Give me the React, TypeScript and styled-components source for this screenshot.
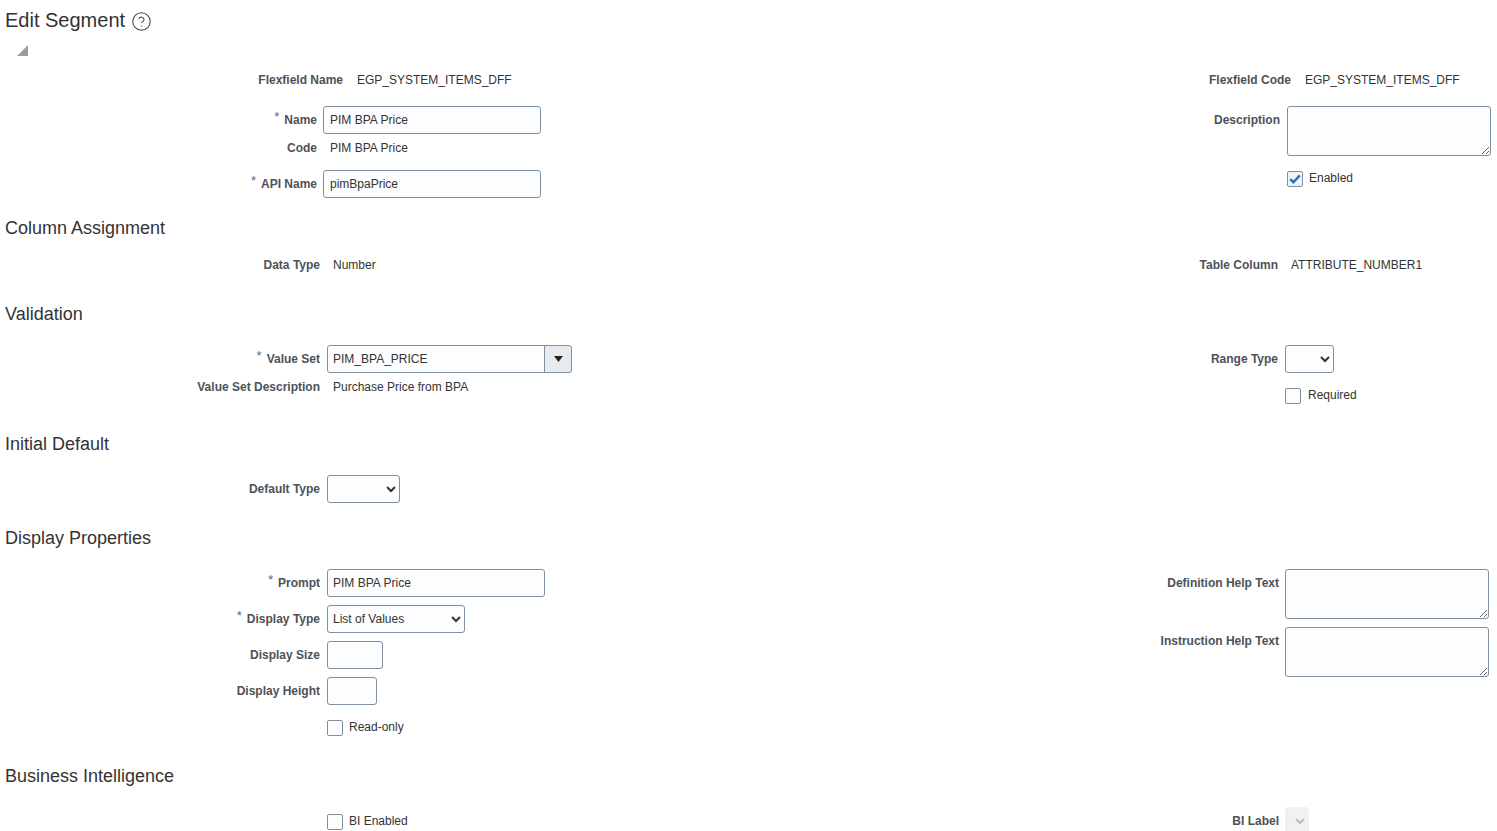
import React from "react";
import styled, { createGlobalStyle } from "styled-components";
import { CircleHelp } from "lucide-react";

const Global = createGlobalStyle`
  html, body { margin: 0; padding: 0; height: 831px; overflow: hidden; background: #fff; }
  body { font-family: "Liberation Sans", Arial, sans-serif; font-size: 12px; color: #333; }
`;

const Page = styled.main`
  width: 1497px;
  height: 831px;
  overflow: hidden;
`;

const TitleBar = styled.header`
  height: 40px;
  padding-left: 5px;
  display: flex;
  align-items: center;
  gap: 6px;
  color: #333;
`;

const Title = styled.h1`
  margin: 0;
  font-size: 20px;
  font-weight: 400;
  line-height: 40px;
`;

const HelpIcon = styled(CircleHelp)`
  width: 21px;
  height: 21px;
  color: #444;
  margin-top: 2px;
`;

const DisclosureRow = styled.div`
  height: 34px;
  padding: 5px 0 0 17px;
  box-sizing: border-box;
`;

const Section = styled.section<{ $mt?: number }>`
  margin-top: ${(p) => p.$mt ?? 21}px;
`;

const SectionTitle = styled.h2`
  margin: 0 0 17px;
  padding-left: 5px;
  font-size: 18px;
  font-weight: 400;
  line-height: 28px;
  color: #333;
`;

const Columns = styled.div<{ $mb?: number }>`
  display: grid;
  grid-template-columns: 1100px 397px;
  align-items: start;
  margin-bottom: ${(p) => p.$mb ?? 0}px;
`;

const Column = styled.div<{ $label: number; $pad?: number; $gap?: number }>`
  --label-w: ${(p) => p.$label}px;
  --label-gap: ${(p) => p.$gap ?? 7}px;
  --field-pad: ${(p) => p.$pad ?? 5}px;
  display: flex;
  flex-direction: column;
  gap: 8px;
  min-width: 0;
`;

const Row = styled.div<{ $flush?: boolean; $text?: boolean }>`
  display: flex;
  align-items: flex-start;
  gap: var(--label-gap);
  min-height: ${(p) => (p.$text ? 12 : 28)}px;
  margin-bottom: ${(p) => (p.$flush ? -8 : 0)}px;
`;

const Label = styled.label<{ $short?: boolean }>`
  width: var(--label-w);
  flex: none;
  text-align: right;
  font-weight: 700;
  color: #4d5257;
  line-height: ${(p) => (p.$short ? 12 : 28)}px;
  white-space: nowrap;
`;

const Star = styled.span`
  color: #3f6fa8;
  font-weight: 400;
  font-size: 13px;
  margin-right: 5px;
  position: relative;
  top: -3px;
`;

const Value = styled.span<{ $short?: boolean; $inset?: number }>`
  padding-left: ${(p) => p.$inset ?? 6}px;
  line-height: ${(p) => (p.$short ? 12 : 28)}px;
  color: #333;
  white-space: nowrap;
`;

const fieldChrome = `
  box-sizing: border-box;
  border: 1px solid #7e8f9f;
  border-radius: 3px;
  background: #fbfdfe;
  font-family: "Liberation Sans", Arial, sans-serif;
  font-size: 12px;
  color: #333;
  outline: none;
`;

const TextInput = styled.input<{ $w: number }>`
  ${fieldChrome}
  width: ${(p) => p.$w}px;
  height: 28px;
  padding: 0 var(--field-pad);
`;

const TextArea = styled.textarea`
  ${fieldChrome}
  display: block;
  width: 204px;
  height: 50px;
  padding: 4px 5px;
`;

const Select = styled.select<{ $w: number }>`
  ${fieldChrome}
  width: ${(p) => p.$w}px;
  height: 28px;
  padding: 0 0 0 1px;
  &:disabled {
    background: #f1f1f1;
    border-color: #f1f1f1;
    opacity: 1;
    color: #bbb;
  }
`;

const Combo = styled.div`
  display: flex;
  width: 245px;
  height: 28px;
`;

const ComboInput = styled.input`
  ${fieldChrome}
  flex: 1;
  min-width: 0;
  height: 28px;
  padding: 0 5px;
  border-radius: 3px 0 0 3px;
`;

const ComboButton = styled.button`
  box-sizing: border-box;
  width: 28px;
  height: 28px;
  padding: 0;
  margin-left: -1px;
  border: 1px solid #7e8f9f;
  border-radius: 0 3px 3px 0;
  background: #e8ebed;
  display: flex;
  align-items: center;
  justify-content: center;
`;

const CheckRow = styled.label<{ $gap?: number }>`
  display: flex;
  align-items: center;
  gap: ${(p) => p.$gap ?? 6}px;
  height: 28px;
  color: #333;
`;

const CheckSpacer = styled.span`
  width: var(--label-w);
  flex: none;
`;

const CheckBox = styled.span<{ $checked?: boolean }>`
  box-sizing: border-box;
  width: 16px;
  height: 16px;
  margin-top: 2px;
  flex: none;
  border: 1px solid #7e8f9f;
  border-radius: 2px;
  background: ${(p) => (p.$checked ? "#eef4fa" : "#fcfdfe")};
  display: flex;
  align-items: center;
  justify-content: center;
`;

const CheckText = styled.span`
  line-height: 14px;
`;

const Check = ({ label, checked, gap }: { label: string; checked?: boolean; gap?: number }) => (
  <Row>
    <CheckSpacer />
    <CheckRow $gap={gap}>
      <CheckBox $checked={checked}>
        {checked && (
          <svg width="12" height="10" viewBox="0 0 12 10">
            <path d="M1.2 5.2 4.4 8.2 10.8 1.4" fill="none" stroke="#2a6fb5" strokeWidth="2.4" />
          </svg>
        )}
      </CheckBox>
      <CheckText>{label}</CheckText>
    </CheckRow>
  </Row>
);

const Req = ({ children }: { children: React.ReactNode }) => (
  <Label>
    <Star>*</Star>
    {children}
  </Label>
);

export default function App() {
  return (
    <Page>
      <Global />
      <TitleBar>
        <Title>Edit Segment</Title>
        <HelpIcon strokeWidth={1.2} />
      </TitleBar>
      <DisclosureRow>
        <svg width="11" height="11" viewBox="0 0 11 11" aria-hidden="true">
          <path d="M11 0V11H0Z" fill="#9a9ea3" />
        </svg>
      </DisclosureRow>

      <Columns $mb={20}>
        <Column $label={343}>
          <Row $text>
            <Label $short>Flexfield Name</Label>
            <Value $short $inset={7}>EGP_SYSTEM_ITEMS_DFF</Value>
          </Row>
        </Column>
        <Column $label={191}>
          <Row $text>
            <Label $short>Flexfield Code</Label>
            <Value $short $inset={7}>EGP_SYSTEM_ITEMS_DFF</Value>
          </Row>
        </Column>
      </Columns>

      <Columns>
        <Column $label={317} $gap={6} $pad={6}>
          <Row $flush>
            <Req>Name</Req>
            <TextInput $w={218} defaultValue="PIM BPA Price" />
          </Row>
          <Row>
            <Label>Code</Label>
            <Value $inset={7}>PIM BPA Price</Value>
          </Row>
          <Row>
            <Req>API Name</Req>
            <TextInput $w={218} defaultValue="pimBpaPrice" />
          </Row>
        </Column>
        <Column $label={180}>
          <Row>
            <Label>Description</Label>
            <TextArea />
          </Row>
          <Check label="Enabled" checked />
        </Column>
      </Columns>

      <Section $mt={16}>
        <SectionTitle>Column Assignment</SectionTitle>
        <Columns>
          <Column $label={320}>
            <Row $text>
              <Label $short>Data Type</Label>
              <Value $short>Number</Value>
            </Row>
          </Column>
          <Column $label={178}>
            <Row $text>
              <Label $short>Table Column</Label>
              <Value $short>ATTRIBUTE_NUMBER1</Value>
            </Row>
          </Column>
        </Columns>
      </Section>

      <Section $mt={29}>
        <SectionTitle>Validation</SectionTitle>
        <Columns>
          <Column $label={320}>
            <Row $flush>
              <Req>Value Set</Req>
              <Combo>
                <ComboInput defaultValue="PIM_BPA_PRICE" />
                <ComboButton aria-label="Search">
                  <svg width="9" height="6" viewBox="0 0 9 6">
                    <path d="M0 0H9L4.5 6Z" fill="#222" />
                  </svg>
                </ComboButton>
              </Combo>
            </Row>
            <Row>
              <Label>Value Set Description</Label>
              <Value>Purchase Price from BPA</Value>
            </Row>
          </Column>
          <Column $label={178}>
            <Row>
              <Label>Range Type</Label>
              <Select $w={49} />
            </Row>
            <Check label="Required" gap={7} />
          </Column>
        </Columns>
      </Section>

      <Section>
        <SectionTitle>Initial Default</SectionTitle>
        <Columns>
          <Column $label={320}>
            <Row>
              <Label>Default Type</Label>
              <Select $w={73} />
            </Row>
          </Column>
        </Columns>
      </Section>

      <Section>
        <SectionTitle>Display Properties</SectionTitle>
        <Columns>
          <Column $label={320}>
            <Row>
              <Req>Prompt</Req>
              <TextInput $w={218} defaultValue="PIM BPA Price" />
            </Row>
            <Row>
              <Req>Display Type</Req>
              <Select $w={138} defaultValue="List of Values">
                <option>List of Values</option>
              </Select>
            </Row>
            <Row>
              <Label>Display Size</Label>
              <TextInput $w={56} />
            </Row>
            <Row>
              <Label>Display Height</Label>
              <TextInput $w={50} />
            </Row>
            <Check label="Read-only" />
          </Column>
          <Column $label={179} $gap={6}>
            <Row>
              <Label>Definition Help Text</Label>
              <TextArea />
            </Row>
            <Row>
              <Label>Instruction Help Text</Label>
              <TextArea />
            </Row>
          </Column>
        </Columns>
      </Section>

      <Section>
        <SectionTitle>Business Intelligence</SectionTitle>
        <Columns>
          <Column $label={320}>
            <Check label="BI Enabled" />
          </Column>
          <Column $label={179} $gap={6}>
            <Row>
              <Label>BI Label</Label>
              <Select $w={24} disabled />
            </Row>
          </Column>
        </Columns>
      </Section>
    </Page>
  );
}
